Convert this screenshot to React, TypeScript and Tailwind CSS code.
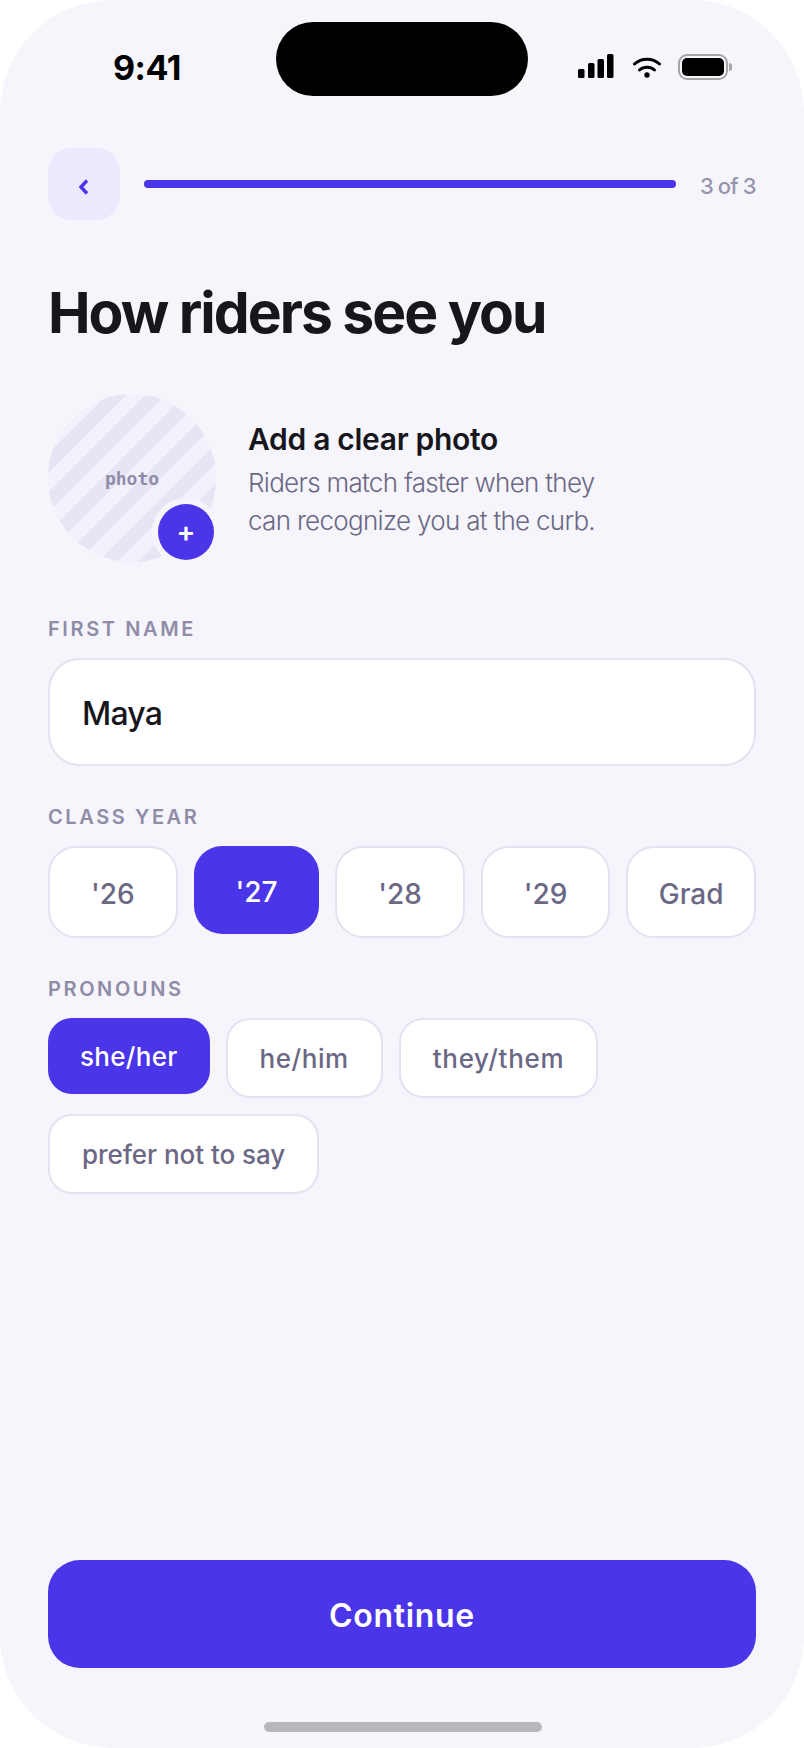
const years = ["'26", "'27", "'28", "'29", "Grad"];
const pronouns = [
  { label: "she/her", spacing: "tracking-[0.3px]" },
  { label: "he/him", spacing: "tracking-[0.55px]" },
  { label: "they/them", spacing: "tracking-[0.7px]" },
  { label: "prefer not to say", spacing: "tracking-[-0.05px]" },
];

function StatusIcons() {
  return (
    <div className="flex items-center">
      <svg className="mb-[2px]" width="36" height="24" viewBox="0 0 36 24" fill="#000">
        <rect x="0" y="15" width="6.5" height="9" rx="1.5" />
        <rect x="10" y="9" width="6.5" height="15" rx="1.5" />
        <rect x="19.5" y="5" width="6.5" height="19" rx="1.5" />
        <rect x="29" y="0" width="6.5" height="24" rx="1.5" />
      </svg>
      <svg className="ml-[19px]" width="28" height="21" viewBox="0 0 28 21" fill="none" stroke="#000" strokeWidth="3" strokeLinecap="round">
        <path d="M1.5 7C8.5 .5 19.5 .5 26.5 7" />
        <path d="M6.5 13C10.5 9.3 17.5 9.3 21.5 13" />
        <circle cx="14" cy="18" r="2.7" fill="#000" stroke="none" />
      </svg>
      <div className="ml-[17px] flex items-center">
        <div className="flex h-[26px] w-[50px] items-center justify-center rounded-[9px] border-2 border-[#a6a6a8]">
          <div className="h-[18px] w-[42px] rounded-[5px] bg-black" />
        </div>
        <div className="ml-[1px] h-[8px] w-[3px] rounded-r-[3px] bg-[#a6a6a8]" />
      </div>
    </div>
  );
}

export default function App() {
  return (
    <div className="h-[1748px] w-[804px] bg-white font-['Inter',sans-serif]">
      <div className="relative flex h-full flex-col rounded-[112px] bg-[#f6f5fb] px-[48px]">
        {/* dynamic island */}
        <div className="absolute left-[276px] top-[22px] h-[74px] w-[252px] rounded-[37px] bg-black" />

        <div className="flex h-[148px] items-start justify-between pl-[65px] pr-[24px] pt-[47px]">
          <span className="text-[34px] font-bold leading-[42px] tracking-[-0.5px] text-black">9:41</span>
          <div className="pt-[7px]">
            <StatusIcons />
          </div>
        </div>

        <div className="flex items-start">
          <button className="flex h-[72px] w-[72px] shrink-0 items-center justify-center rounded-[24px] bg-[#ece9fe]">
            <svg className="mt-[6px]" width="14" height="18" viewBox="0 0 14 18" fill="none" stroke="#4a35e8" strokeWidth="3.4">
              <path d="M10 2.5L4 9l6 6.5" />
            </svg>
          </button>
          <div className="ml-[24px] mt-[32px] h-[8px] w-[532px] shrink-0 rounded-full bg-[#4a35e8]" />
          <span className="ml-[24px] mt-[22px] whitespace-nowrap text-[22px] font-medium leading-[32px] tracking-[-0.9px] text-[#9694ad]">3 of 3</span>
        </div>

        <h1 className="mt-[59px] text-[57px] font-bold leading-[68px] tracking-[-2px] text-[#17161d]">How riders see you</h1>

        <div className="mt-[47px] flex items-center">
          <div className="relative h-[168px] w-[168px] shrink-0">
            <div className="flex h-full w-full items-center justify-center rounded-full bg-[repeating-linear-gradient(135deg,#f3f1fc_0_14px,#e7e5f3_14px_28px)]">
              <span className="font-['DejaVu_Sans_Mono',monospace] text-[18px] font-bold text-[#8f8ca8]">photo</span>
            </div>
            <div className="absolute bottom-[2px] right-[2px] flex h-[56px] w-[56px] items-center justify-center rounded-full bg-[#4a35e8] text-[28px] font-semibold leading-none text-white shadow-[0_0_0_6px_#f6f5fb]">
              +
            </div>
          </div>
          <div className="ml-[32px] pt-[3px]">
            <div className="text-[30px] font-semibold leading-[40px] tracking-[-0.3px] text-[#17161d]">Add a clear photo</div>
            <p className="mt-[5px] text-[26px] font-light leading-[38px] tracking-[-0.7px] text-[#6b6885]">
              Riders match faster when they
              <br />
              can recognize you at the curb.
            </p>
          </div>
        </div>

        <label className="mt-[53px] text-[20px] font-semibold leading-[28px] tracking-[2.6px] text-[#8f8ca8]">FIRST NAME</label>
        <div className="mt-[15px] flex h-[108px] items-center rounded-[32px] border-2 border-[#e4e2f2] bg-white px-[32px] pt-[3px] text-[32px] font-medium tracking-[-0.8px] text-[#17161d]">
          Maya
        </div>

        <label className="mt-[37px] text-[20px] font-semibold leading-[28px] tracking-[2.6px] text-[#8f8ca8]">CLASS YEAR</label>
        <div className="mt-[15px] flex items-start gap-[16px]">
          {years.map((year) =>
            year === "'27" ? (
              <button key={year} className="flex-1 rounded-[28px] bg-[#4a35e8] pb-[22px] pt-[26px] text-[28px] font-medium leading-[40px] text-white">
                {year}
              </button>
            ) : (
              <button key={year} className="flex-1 rounded-[28px] border-2 border-[#e4e2f2] bg-white pb-[22px] pt-[26px] text-[28px] font-medium leading-[40px] text-[#6b6885]">
                {year}
              </button>
            ),
          )}
        </div>

        <label className="mt-[37px] text-[20px] font-semibold leading-[28px] tracking-[2.6px] text-[#8f8ca8]">PRONOUNS</label>
        <div className="mt-[15px] flex flex-wrap items-start gap-[16px]">
          {pronouns.map((item) =>
            item.label === "she/her" ? (
              <button key={item.label} className={`rounded-[24px] bg-[#4a35e8] px-[32px] pb-[19px] pt-[21px] text-[26px] font-medium leading-[36px] text-white ${item.spacing}`}>
                {item.label}
              </button>
            ) : (
              <button key={item.label} className={`rounded-[24px] border-2 border-[#e4e2f2] bg-white px-[32px] pb-[19px] pt-[21px] text-[26px] font-medium leading-[36px] text-[#6b6885] ${item.spacing}`}>
                {item.label}
              </button>
            ),
          )}
        </div>

        <button className="mt-auto h-[108px] shrink-0 rounded-[32px] bg-[#4a35e8] pt-[3px] text-[32px] font-semibold tracking-[0.7px] text-white">Continue</button>
        <div className="mb-[16px] ml-[216px] mt-[54px] h-[10px] w-[278px] rounded-full bg-[#b8b8ba]" />
      </div>
    </div>
  );
}
